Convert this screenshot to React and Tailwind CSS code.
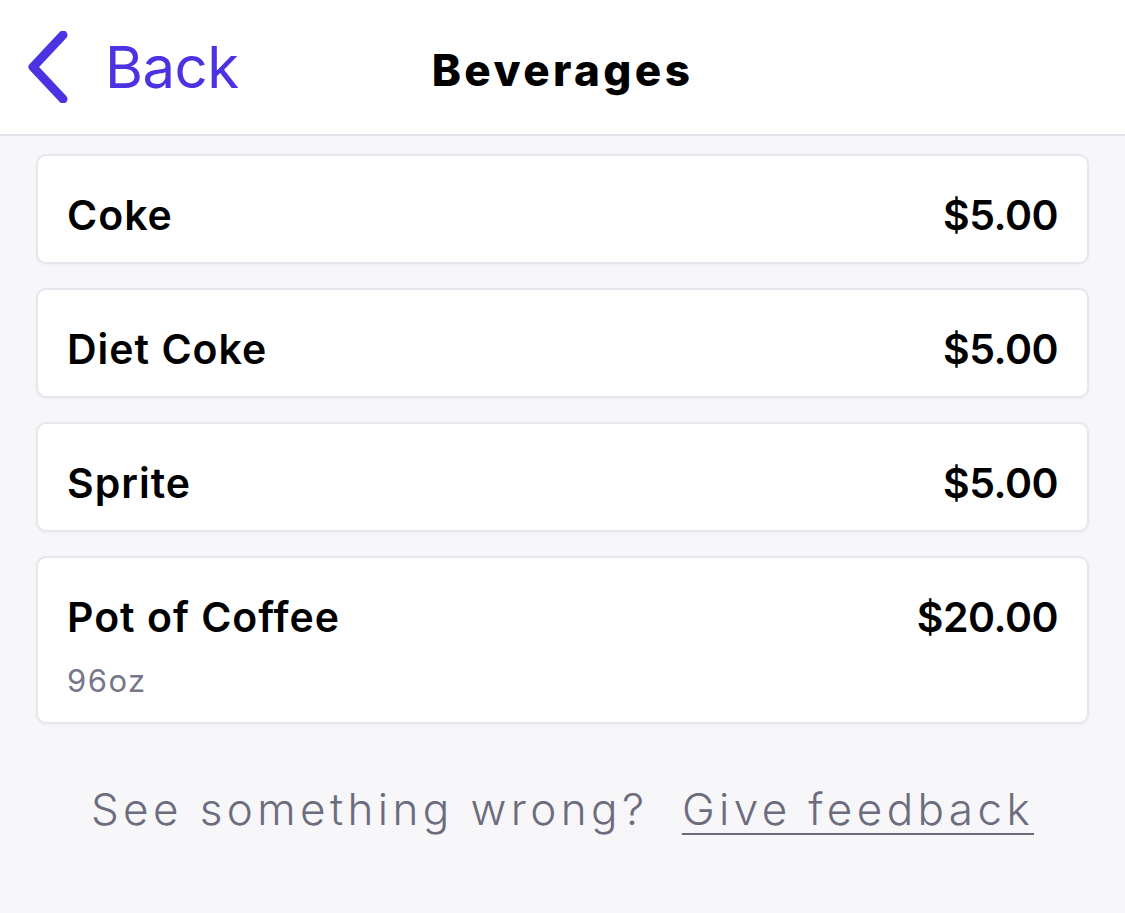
const items = [
  { name: 'Coke', price: '$5.00' },
  { name: 'Diet Coke', price: '$5.00' },
  { name: 'Sprite', price: '$5.00' },
  { name: 'Pot of Coffee', price: '$20.00', note: '96oz' },
];

function ChevronLeft() {
  return (
    <svg width="44" height="72" viewBox="0 0 44 72" fill="none">
      <path d="M36 4 L6 36 L36 68" stroke="#4b32e3" strokeWidth="9" strokeLinecap="round" strokeLinejoin="round" />
    </svg>
  );
}

export default function App() {
  return (
    <div className="min-h-[913px] bg-[#f7f7f9] font-['Inter',sans-serif]">
      <header className="grid h-[136px] grid-cols-[1fr_auto_1fr] items-center border-b-2 border-[#e1e1e8] bg-white">
        <button className="flex items-center gap-[34px] pl-[27px] text-[#4b32e3]">
          <ChevronLeft />
          <span className="text-[58px] leading-none tracking-[-0.5px]">Back</span>
        </button>
        <h1 className="pt-[6px] text-[44px] font-extrabold tracking-[3.4px] text-black">Beverages</h1>
        <div />
      </header>

      <main className="flex flex-col gap-[24px] px-[36px] pt-[18px]">
        {items.map((item) => (
          <div
            key={item.name}
            className="flex flex-col rounded-[10px] border-2 border-[#e6e6ec] bg-white px-[29px] pt-[37px] pb-[25px] shadow-[0_1px_3px_rgba(0,0,0,0.04)]"
          >
            <div className="flex items-center justify-between text-[41px] font-semibold leading-[44px] text-black">
              <span className="tracking-[1px]">{item.name}</span>
              <span className="tracking-[-0.5px]">{item.price}</span>
            </div>
            {item.note && (
              <div className="mt-[25px] text-[31px] leading-[33px] tracking-[1.5px] text-[#77778a]">{item.note}</div>
            )}
          </div>
        ))}
      </main>

      <p className="mt-[60px] text-center text-[44px] font-light leading-[50px] tracking-[4.4px] text-[#6c6c7e]">
        See something wrong?{'\u00a0 '}
        <a className="underline decoration-2 underline-offset-[8px]">Give feedback</a>
      </p>
    </div>
  );
}
